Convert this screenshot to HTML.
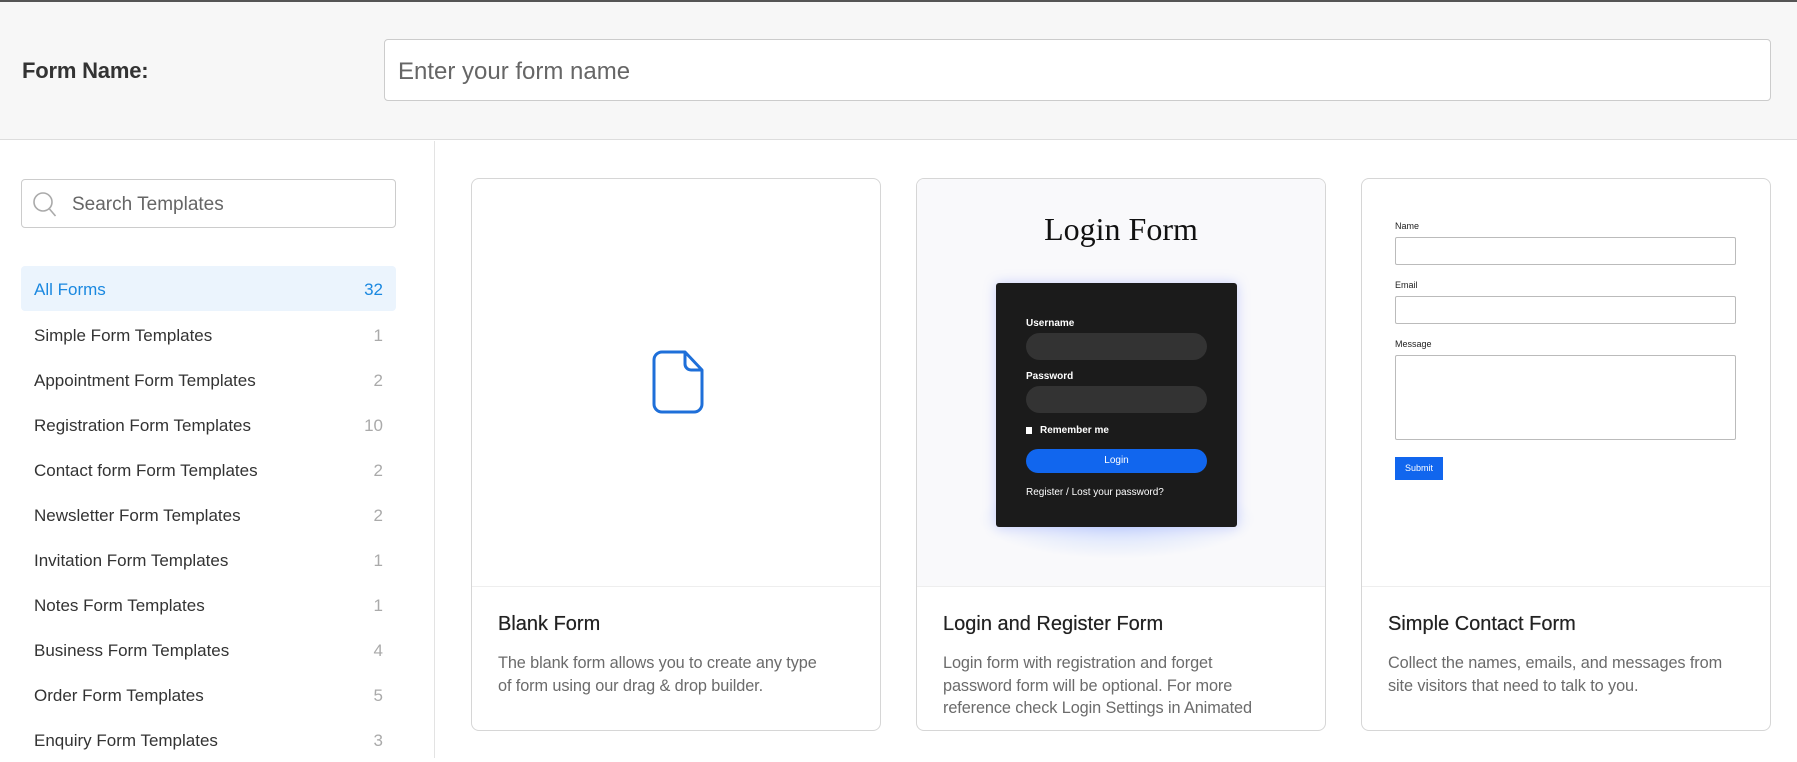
<!DOCTYPE html>
<html><head><meta charset="utf-8"><style>
*{box-sizing:border-box;margin:0;padding:0}
body{width:1797px;height:758px;overflow:hidden;background:#fff;font-family:"Liberation Sans",sans-serif;position:relative;color:#333}
.a{position:absolute}
.hdr{left:0;top:0;width:1797px;height:140px;background:#f7f7f7;border-top:2px solid #555;border-bottom:1px solid #ddd}
.row{left:21px;width:375px;height:45px;font-size:17px;color:#333;display:flex;align-items:center;justify-content:space-between;padding:3px 13px 0}
.row span{color:#aaa}
.card{border:1px solid #d6d6d6;border-radius:8px;top:178px;height:553px;width:410px;overflow:hidden;background:#fff}
.card .img{position:absolute;left:0;top:0;width:100%;height:408px;border-bottom:1px solid #eee}
.card h3{position:absolute;left:26px;top:434px;font-size:20px;font-weight:normal;color:#222;text-shadow:0 0 .4px #222}
.card p{position:absolute;left:26px;top:473px;width:365px;font-size:16.3px;line-height:22.5px;color:#6b6b6b;letter-spacing:-.1px}
.lbl{font-size:9px;color:#222}
.inp{border:1px solid #bbb;border-radius:2px;background:#fff}
</style></head><body>
<div class="a hdr"></div>
<div class="a" style="left:22px;top:58px;font-size:22px;color:#333;font-weight:bold;letter-spacing:-.2px">Form Name:</div>
<div class="a" style="left:384px;top:39px;width:1387px;height:62px;background:#fff;border:1px solid #ccc;border-radius:4px;font-size:24px;color:#666;padding:18px 13px">Enter your form name</div>
<div class="a" style="left:434px;top:141px;width:1px;height:617px;background:#e3e3e3"></div>
<div class="a" style="left:21px;top:179px;width:375px;height:49px;border:1px solid #ccc;border-radius:4px;font-size:19px;color:#666;padding:14px 0 0 50px">Search Templates
<svg class="a" style="left:10px;top:10px" width="28" height="30" viewBox="0 0 28 30"><circle cx="11" cy="12" r="9" fill="none" stroke="#aaa" stroke-width="1.6"/><path d="M17.5 19l6 7" stroke="#aaa" stroke-width="1.6"/></svg></div>
<div class="a row" style="top:266px;background:#ebf4fd;border-radius:4px;color:#1a88e0">All Forms<span style="color:#1a88e0">32</span></div>
<div class="a row" style="top:312px">Simple Form Templates<span>1</span></div>
<div class="a row" style="top:357px">Appointment Form Templates<span>2</span></div>
<div class="a row" style="top:402px">Registration Form Templates<span>10</span></div>
<div class="a row" style="top:447px">Contact form Form Templates<span>2</span></div>
<div class="a row" style="top:492px">Newsletter Form Templates<span>2</span></div>
<div class="a row" style="top:537px">Invitation Form Templates<span>1</span></div>
<div class="a row" style="top:582px">Notes Form Templates<span>1</span></div>
<div class="a row" style="top:627px">Business Form Templates<span>4</span></div>
<div class="a row" style="top:672px">Order Form Templates<span>5</span></div>
<div class="a row" style="top:717px">Enquiry Form Templates<span>3</span></div>

<div class="a card" style="left:471px">
<div class="img"><svg class="a" style="left:180px;top:171px" width="52" height="64" viewBox="0 0 52 64"><path d="M10 2H33L50 20V54a8 8 0 0 1-8 8H10a8 8 0 0 1-8-8V10a8 8 0 0 1 8-8z" fill="none" stroke="#1e6fd9" stroke-width="3" stroke-linejoin="round"/><path d="M33 2V14a6 6 0 0 0 6 6H50" fill="none" stroke="#1e6fd9" stroke-width="3" stroke-linejoin="round"/></svg></div>
<h3>Blank Form</h3><p>The blank form allows you to create any type<br>of form using our drag &amp; drop builder.</p></div>

<div class="a card" style="left:916px">
<div class="img" style="background:#f9f9fb">
<div class="a" style="left:0;width:100%;top:32px;text-align:center;font-family:'Liberation Serif',serif;font-size:32px;color:#111">Login Form</div>
<div class="a" style="left:60px;top:300px;width:280px;height:80px;border-radius:50%;background:radial-gradient(ellipse,rgba(120,160,255,.35),rgba(255,255,255,0) 70%)"></div>
<div class="a" style="left:79px;top:104px;width:241px;height:244px;background:#1b1b1b;border-radius:3px;box-shadow:0 0 12px rgba(110,130,255,.35);color:#fff;font-size:10px">
<div class="a" style="left:30px;top:35px;font-weight:bold">Username</div>
<div class="a" style="left:30px;top:50px;width:181px;height:27px;border-radius:14px;background:#333"></div>
<div class="a" style="left:30px;top:88px;font-weight:bold">Password</div>
<div class="a" style="left:30px;top:103px;width:181px;height:27px;border-radius:14px;background:#333"></div>
<div class="a" style="left:30px;top:144px;width:6px;height:7px;background:#fff"></div>
<div class="a" style="left:44px;top:142px;font-weight:bold">Remember me</div>
<div class="a" style="left:30px;top:166px;width:181px;height:24px;border-radius:12px;background:#1166ee;text-align:center;line-height:24px">Login</div>
<div class="a" style="left:30px;top:204px">Register / Lost your password?</div>
</div></div>
<h3>Login and Register Form</h3><p>Login form with registration and forget<br>password form will be optional. For more<br>reference check Login Settings in Animated</p></div>

<div class="a card" style="left:1361px">
<div class="img">
<div class="a lbl" style="left:33px;top:42px">Name</div>
<div class="a inp" style="left:33px;top:58px;width:341px;height:28px"></div>
<div class="a lbl" style="left:33px;top:101px">Email</div>
<div class="a inp" style="left:33px;top:117px;width:341px;height:28px"></div>
<div class="a lbl" style="left:33px;top:160px">Message</div>
<div class="a inp" style="left:33px;top:176px;width:341px;height:85px"></div>
<div class="a" style="left:33px;top:278px;width:48px;height:23px;background:#1166ee;color:#fff;font-size:9px;text-align:center;line-height:23px">Submit</div>
</div>
<h3>Simple Contact Form</h3><p>Collect the names, emails, and messages from<br>site visitors that need to talk to you.</p></div>
</body></html>
